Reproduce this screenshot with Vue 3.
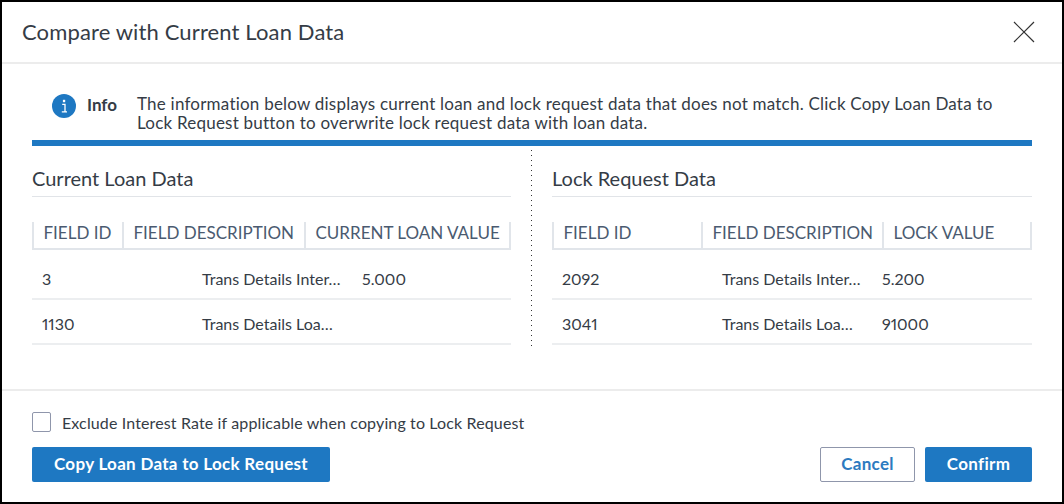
<script setup>
const panels = [
  {
    title: 'Current Loan Data',
    cols: '90px 182px 207px',
    heads: ['FIELD ID', 'FIELD DESCRIPTION', 'CURRENT LOAN VALUE'],
    rows: [
      ['3', 'Trans Details Inter…', '5.000'],
      ['1130', 'Trans Details Loa…', ''],
    ],
  },
  {
    title: 'Lock Request Data',
    cols: '149px 181px 150px',
    heads: ['FIELD ID', 'FIELD DESCRIPTION', 'LOCK VALUE'],
    rows: [
      ['2092', 'Trans Details Inter…', '5.200'],
      ['3041', 'Trans Details Loa…', '91000'],
    ],
  },
]
</script>

<template>
  <div class="dialog">
    <header class="head">
      <h1>Compare with Current Loan Data</h1>
      <svg class="close" width="22" height="22" viewBox="0 0 22 22">
        <path d="M1 1 21 21M21 1 1 21" stroke="#333" stroke-width="1.2" fill="none" />
      </svg>
    </header>
    <main class="body">
      <div class="info">
        <svg class="info-icon" width="24" height="24" viewBox="0 0 24 24">
          <circle cx="12" cy="12" r="12" fill="#1e78c2" />
          <path d="M10.2 10.4h2.8v7.2M9.8 17.9h5.2" stroke="#fff" stroke-width="1.3" fill="none" />
          <rect x="10.9" y="5.8" width="2.3" height="2.4" fill="#fff" />
        </svg>
        <b>Info</b>
        <p>The information below displays current loan and lock request data that does not match. Click Copy Loan Data to Lock Request button to overwrite lock request data with loan data.</p>
      </div>
      <div class="panels">
        <section v-for="p in panels" :key="p.title" class="panel">
          <h2>{{ p.title }}</h2>
          <div class="thead" :style="{ gridTemplateColumns: p.cols }">
            <div v-for="h in p.heads" :key="h" class="th">{{ h }}</div>
          </div>
          <div v-for="r in p.rows" :key="r[0]" class="tr">
            <div v-for="(c, i) in r" :key="i" class="td">{{ c }}</div>
          </div>
        </section>
      </div>
    </main>
    <footer class="foot">
      <label class="check"><span class="box"></span>Exclude Interest Rate if applicable when copying to Lock Request</label>
      <div class="actions">
        <button class="btn primary wide">Copy Loan Data to Lock Request</button>
        <div class="right">
          <button class="btn outline">Cancel</button>
          <button class="btn primary confirm">Confirm</button>
        </div>
      </div>
    </footer>
  </div>
</template>

<style>
html, body { margin: 0; background: #fff; }
</style>

<style scoped>
.dialog {
  box-sizing: border-box;
  width: 1064px;
  height: 504px;
  border: 2px solid #000;
  background: #fff;
  display: flex;
  flex-direction: column;
  font-family: Lato, "Open Sans", sans-serif;
  color: #353c46;
}
.head {
  height: 62px;
  box-sizing: border-box;
  flex: none;
  border-bottom: 2px solid #ececec;
  display: flex;
  align-items: center;
  justify-content: space-between;
  padding: 0 27px 0 20px;
}
h1 { margin: 0 0 2px; font-size: 22px; font-weight: 400; letter-spacing: 0.13px; color: #353c46; }
.close { display: block; }
.body { flex: 1; padding: 0 30px; border-bottom: 2px solid #ececec; }
.info {
  height: 82px;
  box-sizing: border-box;
  display: flex;
  align-items: flex-start;
  padding: 30px 0 0 20px;
  border-bottom: 6px solid #1e78c2;
  font-size: 17px;
  line-height: 19px;
  letter-spacing: 0.22px;
}
.info-icon { flex: none; }
.info b { width: 50px; margin-left: 11px; font-weight: 700; flex: none; line-height: 21px; font-size: 17px; letter-spacing: 0; }
.info p { margin: 0 20px 0 0; }
.panels { display: grid; grid-template-columns: 479px 480px; column-gap: 41px; position: relative; }
.panels::after {
  content: '';
  position: absolute;
  left: 499px;
  top: 4px;
  width: 1px;
  height: 196px;
  background: repeating-linear-gradient(to bottom, #333 0, #333 1px, transparent 1px, transparent 5px);
}
.panel { padding-top: 21px; }
h2 {
  margin: 0;
  height: 29px;
  font-size: 20px;
  line-height: 23px;
  font-weight: 400;
  border-bottom: 1px solid #e1e4e8;
  color: #353c46;
}
.thead {
  display: grid;
  margin-top: 25px;
  height: 28px;
  box-sizing: border-box;
  border-bottom: 2px solid #e1e5ea;
  border-right: 2px solid #e1e5ea;
}
.th {
  border-left: 2px solid #e1e5ea;
  padding-left: 9.5px;
  font-size: 17px;
  line-height: 21px;
  color: #4a5a70;
  white-space: nowrap;
}
.tr {
  display: grid;
  grid-template-columns: repeat(3, 160px);
  height: 45px;
  padding-top: 4px;
  box-sizing: border-box;
  border-bottom: 2px solid #eceef0;
  align-items: center;
}
.thead + .tr { height: 50px; padding-top: 8px; }
.td { padding-left: 10px; font-size: 16px; color: #353c46; white-space: nowrap; font-variant-numeric: proportional-nums; }
.foot { height: 111px; flex: none; padding: 20px 30px 0; box-sizing: border-box; }
.check { display: flex; align-items: center; height: 22px; font-size: 16px; letter-spacing: 0.13px; padding-bottom: 0; }
.box {
  width: 17px;
  height: 18px;
  border: 1px solid #8f96ab;
  border-radius: 2px;
  margin-right: 11px;
  flex: none;
}
.actions { display: flex; justify-content: space-between; margin-top: 14px; }
.right { display: flex; gap: 10px; }
.btn {
  height: 35px;
  border-radius: 2px;
  font-family: inherit;
  font-size: 17px;
  font-weight: 700;
  letter-spacing: 0.3px;
  padding: 0 0 2px;
  box-sizing: border-box;
}
.primary { background: #1e78c2; color: #fff; border: none; }
.wide { width: 298px; }
.confirm { width: 107px; }
.outline { width: 95px; background: #fff; color: #2c7ac0; border: 1px solid #8f96ab; }
</style>
